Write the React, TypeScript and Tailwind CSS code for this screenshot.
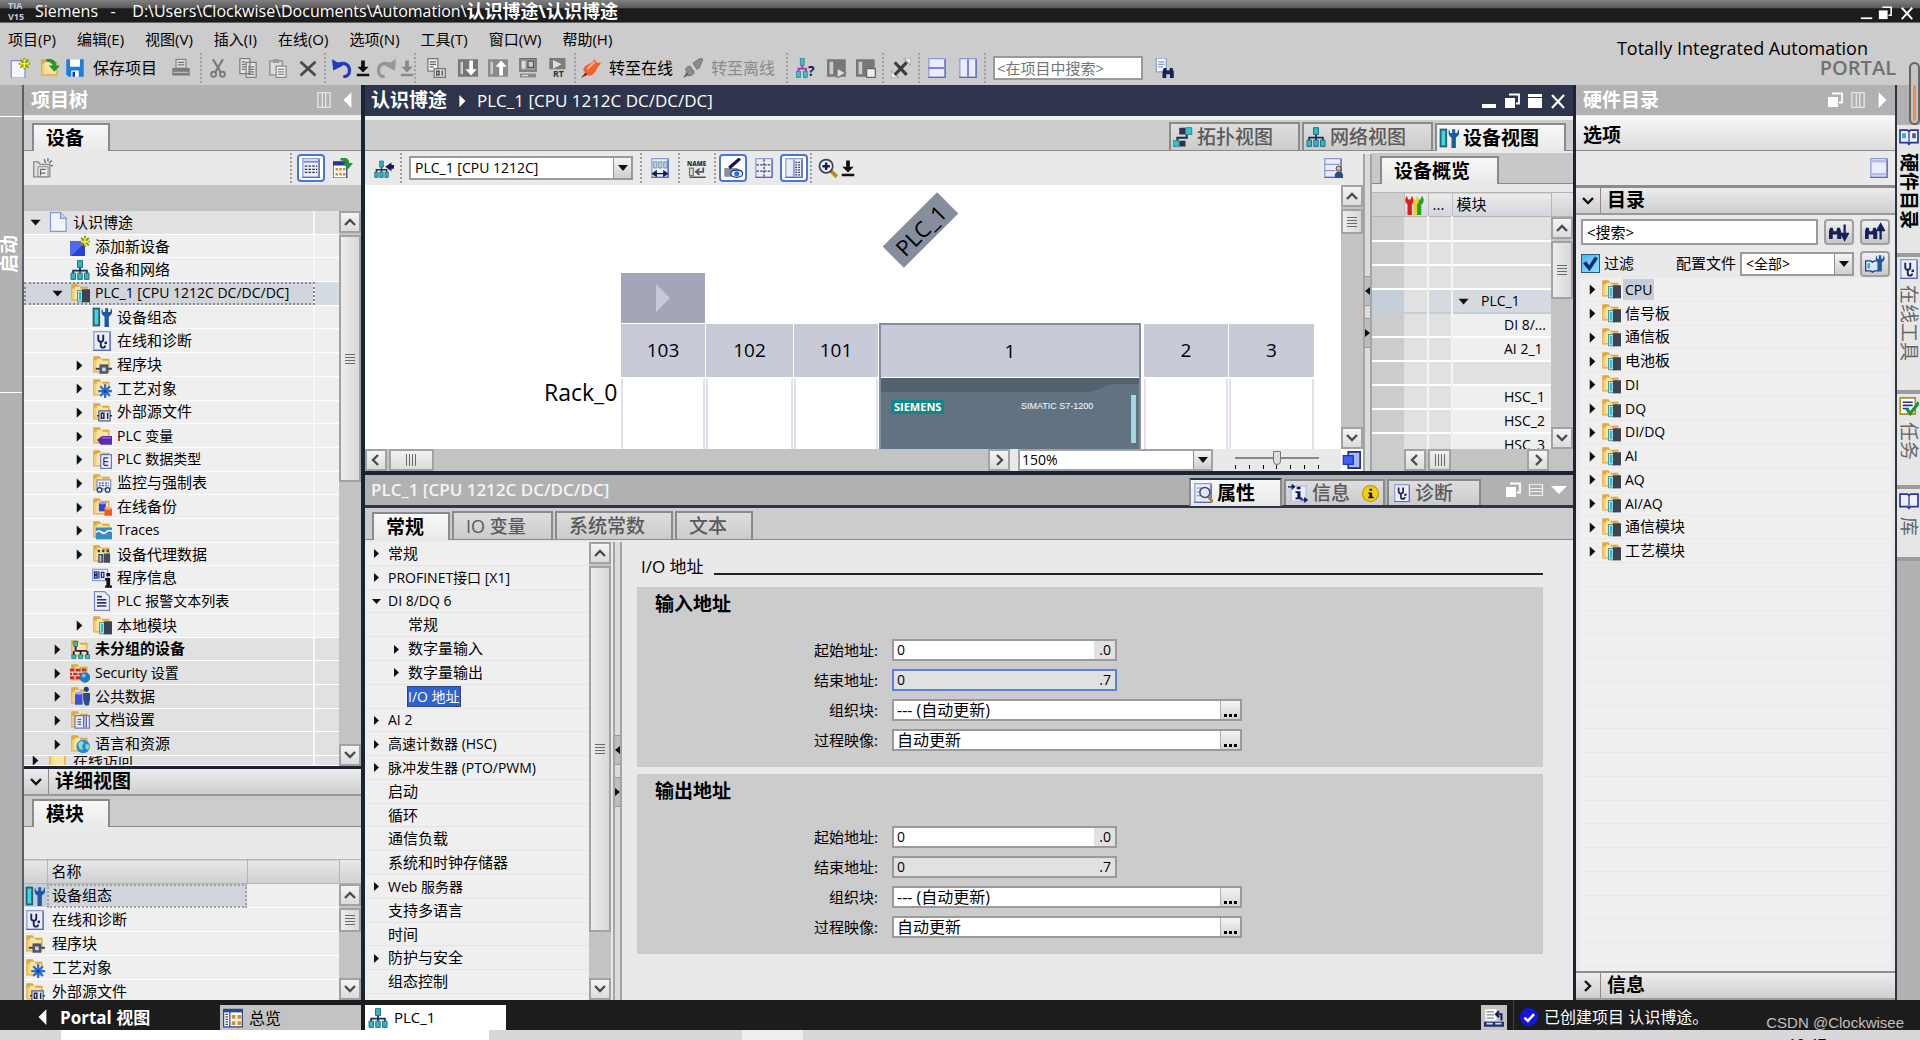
import type { ReactNode } from 'react';
import clsx from 'clsx';

/* ---------- icons, drawn on a 16 x 16 grid ---------- */

const folder = (
  <>
    <path d="M1 1h5l1.5 2H14v11H1z" fill="#e0a83c" />
    <path d="M2 4.5h2V3h3.5l1 1.5H13V13H2z" fill="#fbe3a0" />
    <path d="M2 13V5l1.5-1.5V13z" fill="#f6cd72" />
  </>
);

const page = (
  <>
    <path d="M1.5.5h13v15h-13z" fill="#e9edff" stroke="#8f9bd0" />
    <path d="M1 15.5h14M14.5 1v14" stroke="#5a68b8" />
  </>
);

const network = (
  <>
    <path d="M8 5v4M2.5 11V8.5h11V11M8 9v2" stroke="#1c2a5c" strokeWidth="1.4" fill="none" />
    <path d="M6 .5h4V6H6zM.8 10.5h3.6v5H.8zM6.2 10.5h3.6v5H6.2zM11.6 10.5h3.6v5h-3.6z" fill="#2fb8c4" stroke="#2a6f86" strokeWidth=".8" />
  </>
);

const stethoscope = (
  <path d="M5 3v3.5a2 2 0 0 0 4 0V3M7 9v2.5a1.6 1.6 0 0 0 3.5 0" stroke="#1c2350" strokeWidth="1.5" fill="none" />
);

const book = (
  <>
    <path d="M.8 2.5h6L8 3.5l1.2-1h6v10h-6L8 13.8l-1.2-1.3h-6z" fill="#eef1ff" stroke="#2733a0" strokeWidth="1.3" />
    <path d="M8 3.5v10" stroke="#2733a0" />
  </>
);

const binoculars = (
  <path d="M1 14V8l1.5-4h3L6.5 7h3l1-3h3L15 8v6h-4.5v-4h-5v4z" fill="#18205c" />
);

const ICONS: Record<string, ReactNode> = {
  newProject: (
    <>
      <path d="M1 2h8l3 4v10H1z" fill="#f3f5ff" stroke="#7f8fe0" />
      <path d="M11.5 0v9M7 4.5h9M8.3 1.3l6.4 6.4M14.7 1.3L8.3 7.7" stroke="#8c9a00" strokeWidth="1.6" />
      <path d="M11.5 1v7M8 4.5h7" stroke="#f4f04a" strokeWidth="1.2" />
    </>
  ),
  open: (
    <>
      {folder}
      <path d="M5 1c5-1 8 1 8 5h3l-4.500 5L7 6h3c0-2-2-3-5-3z" fill="#1f9636" />
    </>
  ),
  save: (
    <>
      <path d="M1 1h14v14H3l-2-2z" fill="#1c7fe0" />
      <path d="M4 1h8v6H4zM5 10h6v5H5z" fill="#fff" />
      <path d="M6 11h2v4H6z" fill="#0b3f94" />
    </>
  ),
  print: (
    <>
      <path d="M4 1h8v7H4z" fill="#ddd" stroke="#888" />
      <path d="M5.500 3.500h5M5.500 5.500h5" stroke="#777" />
      <path d="M1 8h14v6H1z" fill="#7c7c7c" />
      <path d="M2 11h12v1H2z" fill="#bbb" />
    </>
  ),
  cut: (
    <>
      <path d="M4 1l6 10M12 1L6 11" stroke="#7a7a7a" strokeWidth="1.800" />
      <circle cx="4.500" cy="13" r="2" fill="none" stroke="#7a7a7a" strokeWidth="1.500" />
      <circle cx="11.500" cy="13" r="2" fill="none" stroke="#7a7a7a" strokeWidth="1.500" />
    </>
  ),
  copy: (
    <>
      <path d="M1.500.5h8v12h-8zM6.500 3.500h8v12h-8z" fill="#e4e4e4" stroke="#808080" />
      <path d="M3 3h3M3 5h3M3 7h3M3 9h3M8 7h5M8 9h5M8 11h5M8 13h5" stroke="#777" />
    </>
  ),
  paste: (
    <>
      <path d="M1.500 2.500h10v11h-10z" fill="#ddd" stroke="#8a8a8a" />
      <path d="M4 1h5v3H4z" fill="#999" />
      <path d="M6.500 6.500h8v9h-8z" fill="#eee" stroke="#8a8a8a" />
      <path d="M8 9h5M8 11h5M8 13h5" stroke="#888" />
    </>
  ),
  delete: <path d="M2 3l12 11M14 3L2 14" stroke="#484848" strokeWidth="2.200" />,
  undo: (
    <>
      <path d="M5 5c6-2 9 1 9 5 0 3-2 5-5 5" fill="none" stroke="#2438c0" strokeWidth="2.600" />
      <path d="M0 1l1 9 8-4z" fill="#2438c0" />
    </>
  ),
  redo: (
    <>
      <path d="M11 5C5 3 2 6 2 10c0 3 2 5 5 5" fill="none" stroke="#969696" strokeWidth="2.600" />
      <path d="M16 1l-1 9-8-4z" fill="#969696" />
    </>
  ),
  drop: (
    <path d="M6.500 2h3v5h3L8 11.500 3.500 7h3zM3 12.500h10v2H3z" fill="#111" />
  ),
  dropOff: (
    <path d="M6.500 2h3v5h3L8 11.500 3.500 7h3zM3 12.500h10v2H3z" fill="#888" />
  ),
  compile: (
    <>
      <path d="M1.500.5h8v10h-8z" fill="#eee" stroke="#777" />
      <path d="M3 3h5M3 5h5M3 7h3" stroke="#666" />
      <path d="M6.500 8.500h9v7h-9z" fill="#ddd" stroke="#777" />
      <path d="M8.500 10.500h2v3h-2zM13 10v4" stroke="#444" fill="none" />
    </>
  ),
  download: (
    <>
      <path d="M0 1h16v14H0z" fill="#777" />
      <path d="M2 3h2v10H2z" fill="#ccc" />
      <path d="M9 2h3v7h3l-4.500 5L6 9h3z" fill="#fff" />
    </>
  ),
  upload: (
    <>
      <path d="M0 1h16v14H0z" fill="#8a8a8a" />
      <path d="M2 3h2v10H2z" fill="#ccc" />
      <path d="M9 14h3V7h3l-4.500-5L6 7h3z" fill="#fff" />
    </>
  ),
  simulate: (
    <>
      <path d="M1.500.5h13v10h-13z" fill="#999" stroke="#6c6c6c" />
      <path d="M3 2.500h3v6H3z" fill="#ddd" />
      <path d="M8 2.500h4.500v5H8z" fill="#ccc" stroke="#555" />
      <path d="M1.500 12.500h13v3h-13z" fill="#888" />
      <path d="M3 14h5" stroke="#ddd" />
    </>
  ),
  runtime: (
    <>
      <path d="M1 0h13v9H1z" fill="#7c7c7c" />
      <path d="M4 1.500l7 3.500-7 3.500z" fill="#ddd" />
      <text x="4" y="15" fontSize="7" fontWeight="700" fill="#333">RT</text>
    </>
  ),
  goOnline: (
    <>
      <path d="M0 16l4-5 2 2z" fill="#7a2a10" />
      <path d="M2 10c-1-3 4-5 6-6l3-3 1.500 2.500L16 4l-3 4c-1 3-4 7-7 6z" fill="#f2622c" />
      <path d="M5 9l6-6" stroke="#ffb08c" strokeWidth="1.500" />
    </>
  ),
  goOffline: (
    <>
      <path d="M0 16l3-5 3 2z" fill="#666" />
      <path d="M2 9c1-2 3-3 4-2l3 4c0 2-3 4-5 3zM8 4l6-4 2 1-3 7-2 1z" fill="#8c8c8c" stroke="#666" strokeWidth=".6" />
    </>
  ),
  accessible: (
    <>
      <path d="M5 5v4M2 11V8.500h6V11" stroke="#b030b0" strokeWidth="1.500" fill="none" />
      <path d="M3.500 0h3v6h-3zM.5 10.500h3v5h-3zM6 10.500h3v5H6z" fill="#35c8d0" stroke="#2a6f86" strokeWidth=".6" />
      <text x="9.500" y="14.500" fontSize="11" fontWeight="700" fill="#141a50">?</text>
    </>
  ),
  startCpu: (
    <>
      <path d="M0 1h15v14H0z" fill="#777" />
      <path d="M2 3h3v10H2z" fill="#ccc" />
      <path d="M8 8l7 4-7 4z" fill="#ddd" stroke="#777" />
    </>
  ),
  stopCpu: (
    <>
      <path d="M0 1h15v14H0z" fill="#777" />
      <path d="M2 3h3v10H2z" fill="#ccc" />
      <path d="M8.500 8.500h7v7h-7z" fill="#eee" stroke="#666" />
    </>
  ),
  crossRef: (
    <>
      <path d="M10 0h6v6zM0 10l6 6H0z" fill="#f0f0f0" stroke="#8a8a8a" strokeWidth=".8" />
      <path d="M3 3.500l9.500 10M12.500 3.500L3 13.500" stroke="#3c3c3c" strokeWidth="2.400" />
    </>
  ),
  splitH: (
    <>
      {page}
      <path d="M1 8h14" stroke="#6f7ee0" strokeWidth="1.500" />
    </>
  ),
  splitV: (
    <>
      {page}
      <path d="M8 1v14" stroke="#6f7ee0" strokeWidth="1.500" />
    </>
  ),
  findProject: (
    <>
      <path d="M1 0h8v11H1z" fill="#f3f5ff" stroke="#8f9bd0" />
      <path d="M2.500 3h5M2.500 5h5M2.500 7h4" stroke="#8f9bd0" />
      <path d="M6 16v-5l1-3h2l.5 2h2l.5-2h2l1 3v5h-3v-3H9v3z" fill="#18205c" />
    </>
  ),
  newGroup: (
    <>
      <path d="M.5 3h4l1 2h8v10H.5z" fill="#ddd" stroke="#888" />
      <path d="M4 7h8v8H4z" fill="#eee" stroke="#888" strokeWidth=".8" />
      <path d="M6 9v5M6 9h4M6 12h4M9 1l1 3M12 0v3M15 2l-2 2M16 6h-2" stroke="#666" fill="none" />
    </>
  ),
  listView: (
    <>
      {page}
      <path d="M2 3h12" stroke="#7c8cdc" strokeWidth="1.500" />
      <path d="M3 6.500h10M3 9h10M3 11.500h10" stroke="#333" strokeDasharray="2 1" />
    </>
  ),
  portalOpen: (
    <>
      <path d="M0 3h11v13H0z" fill="#fff" stroke="#2a3a8a" />
      <path d="M0 3h11v3H0z" fill="#2a3a8a" />
      <path d="M2 8h2v2H2zM5 8h2v2H5zM8 8h2v2H8zM2 12h2v2H2zM5 12h2v2H5zM8 12h2v2H8z" fill="#e08a1c" />
      <path d="M6 0c5-1 7 1 7 4h3l-4 5-4-5h2c0-1-1-2-4-2z" fill="#1f9636" />
    </>
  ),
  project: (
    <>
      <path d="M2 .5h8L14.500 5v10.500H2z" fill="#f1f4ff" stroke="#8495d8" />
      <path d="M10 .5V5h4.500" fill="#c9d3fa" stroke="#8495d8" />
    </>
  ),
  addDevice: (
    <>
      <path d="M0 4h12v12H0z" fill="#2b3fd6" />
      <path d="M0 4h12v1L1 16H0z" fill="#4f6af0" />
      <path d="M12 0v9M7.500 4.500h8.500M9 1.500l6 6M15 1.500l-6 6" stroke="#8a9400" strokeWidth="1.500" />
      <path d="M12 1.500v6M9 4.500h6" stroke="#f7f35a" strokeWidth="1.200" />
    </>
  ),
  network,
  networkGo: (
    <>
      <g transform="translate(0 2) scale(.75 .875)">{network}</g>
      <path d="M16 5.500h-2v-2L9 7l5 3.500v-2h2z" fill="#121a60" />
    </>
  ),
  topology: (
    <>
      <path d="M11 6v2.500H3.500V11" fill="none" stroke="#1c2a5c" strokeWidth="1.600" />
      <path d="M5 .5h5V6H5zM5 11h5v4.500H5z" fill="#2c3448" />
      <path d="M10 .5h5V6h-5zM0 11h5v4.500H0z" fill="#35c0cc" stroke="#2a6f86" strokeWidth=".6" />
    </>
  ),
  config: (
    <>
      <path d="M.5.5h6v15h-6z" fill="#2b5f74" />
      <path d="M2 2h3v12H2z" fill="#35dbe0" />
      <path d="M8 1l1 3h1.500V1h2.500v3h1.500l1-3c2 4-1 6-2 6.500V16h-3.500V7.500C8 7 7 4 8 1z" fill="#1d5a9e" />
    </>
  ),
  diagnose: (
    <>
      {page}
      {stethoscope}
      <path d="M10 8.500h2v2h-2z" fill="#1c2350" />
    </>
  ),
  folder,
  folderPlc: (
    <>
      {folder}
      <path d="M6 6h5v9H6z" fill="#d8f6f8" stroke="#2a6f86" strokeWidth=".6" />
      <path d="M7 7h2v7H7z" fill="#22c4cc" />
      <path d="M9.500 5H16v10.500H9.500z" fill="#3c4454" />
    </>
  ),
  blocks: (
    <>
      {folder}
      <path d="M3 11h13" stroke="#3a4050" strokeWidth="1.500" />
      <path d="M6 7.500h7V15H6z" fill="#4d5568" />
      <path d="M8 10h3v3H8z" fill="#c8cede" />
    </>
  ),
  tech: (
    <>
      {folder}
      <path d="M10.500 5v11M5 10.500h11M6.600 6.600l7.800 7.800M14.400 6.600l-7.800 7.800" stroke="#2a6fd8" strokeWidth="1.800" />
      <circle cx="10.500" cy="10.500" r="2.800" fill="#2a6fd8" />
      <circle cx="10.500" cy="10.500" r="1.200" fill="#123a90" />
    </>
  ),
  source: (
    <>
      {folder}
      <path d="M5.500 7h9v8h-9z" fill="#e6e8f4" stroke="#555e7c" />
      <path d="M7.500 9h2v4h-2zM12.500 8.500v5M4 11h1.500M14.500 11H16" stroke="#222a50" strokeWidth="1.200" fill="none" />
    </>
  ),
  tags: (
    <>
      {folder}
      <path d="M4 11l4-3h8v7H7z" fill="#5c2cb0" />
      <path d="M8 9h7v1H8z" fill="#9a74dc" />
    </>
  ),
  types: (
    <>
      {folder}
      <path d="M7 4.500h8.500v11H7z" fill="#eceefc" stroke="#6c78c0" />
      <path d="M9.500 7v6M9.500 7H13M9.500 10H13M9.500 13H13" stroke="#2a3470" fill="none" />
    </>
  ),
  watch: (
    <>
      {folder}
      <path d="M4 5.500h11v7H4z" fill="#eceefc" stroke="#8a94cc" />
      <path d="M5.500 8h8M5.500 10h8" stroke="#555" strokeDasharray="1.500 1" />
      <circle cx="6" cy="13.500" r="1.800" fill="#cfe" stroke="#23307c" />
      <circle cx="12.500" cy="13.500" r="1.800" fill="#cfe" stroke="#23307c" />
    </>
  ),
  backup: (
    <>
      {folder}
      <path d="M5.500 4.500h5.500v7H5.500z" fill="#2b49d8" />
      <ellipse cx="8.200" cy="4.500" rx="2.800" ry="1.200" fill="#8aa0f4" />
      <path d="M10 9h6v6h-6z" fill="#ee5a22" />
      <ellipse cx="13" cy="9" rx="3" ry="1.200" fill="#ffa27a" />
    </>
  ),
  traces: (
    <>
      {folder}
      <path d="M3 6h13v9.500H3z" fill="#3a8cc4" />
      <path d="M3 10c4-4 5 3 8 0 2-2 3-2 5-1" stroke="#fff" strokeWidth="1.400" fill="none" />
    </>
  ),
  proxy: (
    <>
      {folder}
      <path d="M4.500 4.500h2v2h-2zM8 4.500h2v2H8zM11.500 4.500h2v2h-2z" fill="#333b50" />
      <path d="M5 8h4v7H5zM9.500 7.500h5V15h-5z" fill="#444d60" />
      <path d="M6 9h1.500v5H6z" fill="#b8c0d0" />
    </>
  ),
  programInfo: (
    <>
      <path d="M.5 1h12v9H.5z" fill="#e9edff" stroke="#8ea0dc" />
      <path d="M2 3h2v2H2zM2 6h2v2H2zM5.500 2.500v6M7.500 3.500h2v4h-2z" fill="none" stroke="#1c2870" />
      <path d="M11.500 4h3v2.500h-3zM10.500 8h4v6H16v1.800h-5.500V14h1v-4h-1z" fill="#111" />
    </>
  ),
  textList: (
    <>
      <path d="M2 .5h8L14 4.500v11H2z" fill="#eef0ff" stroke="#7c88cc" />
      <path d="M4 4.500h4M4 7h7.500M4 9.500h7.500M4 12h7.500" stroke="#2a3478" strokeWidth="1.300" />
    </>
  ),
  ungrouped: (
    <>
      {folder}
      <path d="M4.500 3v6.500M4.500 9.500h9M3 13V9.500M8.500 13V9.500M14 13V9.500" stroke="#1c2450" strokeWidth="1.500" fill="none" />
      <path d="M3 2h3v4H3zM1.500 12.500h3V16h-3zM7 12.500h3V16H7zM12.500 12.500h3V16h-3z" fill="#35c0cc" stroke="#2a5f76" strokeWidth=".6" />
    </>
  ),
  security: (
    <>
      {folder}
      <path d="M0 4.500h13V13H0z" fill="#c43020" />
      <path d="M0 7.300h13M0 10.200h13M4 4.500v3M9 4.500v3M2 7.300v3M6.500 7.300v3M4 10.200V13" stroke="#f6d8d0" strokeWidth=".9" />
      <circle cx="12" cy="11.500" r="4.200" fill="#1c7cc4" />
      <circle cx="11" cy="10" r="1.500" fill="#7cc4f0" />
    </>
  ),
  common: (
    <>
      {folder}
      <path d="M4 5.500h6V15H4z" fill="#3a52e0" />
      <ellipse cx="7" cy="5.500" rx="3" ry="1.300" fill="#a0b0fa" />
      <circle cx="13" cy="2.500" r="2" fill="#233c74" />
      <path d="M10.500 5.500H16V11l-1 4.500h-3L10.500 11z" fill="#23508c" />
    </>
  ),
  docs: (
    <>
      {folder}
      <path d="M4 4.500h11.500v10H4z" fill="#eceefc" stroke="#6c78c0" />
      <path d="M6 7.500h3M6 9.500h3M6 11.500h3M11 5v9M13 5v9" stroke="#4c58a8" />
    </>
  ),
  languages: (
    <>
      {folder}
      <circle cx="10.500" cy="10" r="5.400" fill="#2a86e0" />
      <path d="M7 7c2-2 4-1 4 0s-2 2-1 4-1 2-2 1-2-3-1-5zM12.500 8l3 1-1 3.500-2-1z" fill="#8ee0c4" />
    </>
  ),
  fit: (
    <>
      {page}
      <path d="M3 3h2.500v5H3zM7 3h2.500v5H7zM11 3h2.500v5H11z" fill="#b8dce0" stroke="#5a7f94" strokeWidth=".6" />
      <path d="M3 12.500h10M5 10.500l-3 2 3 2zM11 10.500l3 2-3 2z" stroke="#141c58" fill="#141c58" />
    </>
  ),
  showName: (
    <>
      <text x="0" y="6" fontSize="5" fontWeight="800" fill="#333">NAME</text>
      <path d="M2 8h3v6H2z" fill="#ddd" stroke="#777" />
      <path d="M13 7.500V11H8M10 8.500L7 11l3 2.500M2 15.500h13" stroke="#555" strokeWidth="1.400" fill="none" />
    </>
  ),
  showLabel: (
    <>
      <path d="M1 8h10l4 2v5H1z" fill="#8a8f9c" />
      <path d="M13.500.5L5 8" stroke="#121850" strokeWidth="2.600" />
      <ellipse cx="11" cy="12.500" rx="4.800" ry="2.900" fill="#e8f0ff" stroke="#23307c" />
      <circle cx="11" cy="12.500" r="2" fill="#2a6fe0" />
    </>
  ),
  grid: (
    <>
      {page}
      <path d="M2 5.500h12M2 10.500h12" stroke="#445" strokeDasharray="2 1" />
      <path d="M8 1v14" stroke="#445" strokeDasharray="2 1" />
    </>
  ),
  tableSide: (
    <>
      {page}
      <path d="M8 1v14" stroke="#6f7ee0" />
      <path d="M9 3.500h5M9 5.500h5M9 7.500h5M9 9.500h5M9 11.500h5M9 13.500h5" stroke="#444" strokeDasharray="1.500 .8" />
    </>
  ),
  zoomIn: (
    <>
      <path d="M10 10l5 5" stroke="#b98a24" strokeWidth="3" />
      <circle cx="6.500" cy="6.500" r="5.300" fill="#eef4ff" stroke="#3a3f58" strokeWidth="1.400" />
      <path d="M6.500 3.500v6M3.500 6.500h6" stroke="#121a60" strokeWidth="2" />
    </>
  ),
  userView: (
    <>
      {page}
      <path d="M1 5h14M1 10h9" stroke="#8f9bd0" />
      <circle cx="12.500" cy="8.500" r="2" fill="#e2b48c" stroke="#222" strokeWidth=".6" />
      <path d="M9.500 16v-3l1.500-2h3l2 2v3z" fill="#23508c" />
    </>
  ),
  overviewCorner: (
    <>
      <path d="M5 1.500h9.500v13H5z" fill="#a8b8f0" stroke="#1c2a7c" strokeWidth="1.300" />
      <path d="M1 4.500h8v7H1z" fill="#3c62f4" stroke="#1c36c0" />
    </>
  ),
  wrenches: (
    <>
      <path d="M9.500.5l1 3h2l1-3c2.500 3 1.500 6-.5 7V16H9.500V7.500z" fill="#24a02c" />
      <path d="M6 .5l1 3h2l1-3c2 3 1 6-.5 7V16h-3V7.500z" fill="#f2d21c" />
      <path d="M1.500.5l1 3h2l1-3C7.500 3.500 6.500 6.500 5.500 7.500V16H2V7.500C0 6.500-.5 3.500 1.500.5z" fill="#dc2020" />
    </>
  ),
  properties: (
    <>
      {page}
      <path d="M3 4h5M3 7h3M3 10h3" stroke="#8f9bd0" />
      <path d="M12 11l4 4" stroke="#b98a24" strokeWidth="2.400" />
      <circle cx="9.500" cy="7.500" r="4" fill="#dfe8fa" stroke="#444a64" strokeWidth="1.200" />
    </>
  ),
  infoArrows: (
    <>
      <path d="M2.500 2.500h12v12h-12z" fill="#eef0ff" stroke="#b4bce8" />
      <path d="M7 3h3v2H7zM6 6.500h4v5h1.500V13H6v-1.500h1.500V8H6z" fill="#10165c" />
      <path d="M0 2.500h3V.5L6 3 3 5.500v-2H0zM10 13h3v-2l3 2.500-3 2.500v-2h-3z" fill="#10165c" />
    </>
  ),
  infoBadge: (
    <>
      <circle cx="8" cy="8" r="7.500" fill="#f2d010" stroke="#b89400" />
      <path d="M7 3.500h2.500v2H7zM6 7h3.500v4H11v1.500H6V11h1V8.500H6z" fill="#111" />
    </>
  ),
  pane: (
    <>
      {page}
      <path d="M2 2.500h12M2 13h12" stroke="#b4bce8" strokeWidth="2" />
    </>
  ),
  findDown: (
    <>
      <g transform="translate(-1 1) scale(.72 .9)">{binoculars}</g>
      <path d="M12.500 2v8M10 9.500h5L12.500 14z" stroke="#18205c" strokeWidth="1.800" fill="#18205c" />
    </>
  ),
  findUp: (
    <>
      <g transform="translate(-1 1) scale(.72 .9)">{binoculars}</g>
      <path d="M12.500 14V6M10 6.500h5L12.500 2z" stroke="#18205c" strokeWidth="1.800" fill="#18205c" />
    </>
  ),
  profile: (
    <>
      <path d="M.5 5.500h4l1.500 1 1.500-1h3v8h-3L6 14.500l-1.500-1h-4z" fill="#d8e6fa" stroke="#2733a0" />
      <path d="M2 7.500h2v4H2z" fill="#22b4cc" />
      <path d="M9 1l1 3h1V1h2v3h1l1-3c1.500 3 0 5-1.500 5.500V14h-3V6.500C9 6 8 4 9 1z" fill="#1d5a9e" />
    </>
  ),
  catalogBook: (
    <>
      {book}
      <path d="M2.500 5h3v4h-3z" fill="#22b4cc" />
      <path d="M10.500 5h3v4h-3z" fill="#5a6478" />
    </>
  ),
  book,
  tasks: (
    <>
      <path d="M1 1.500h12v13H1z" fill="#fff" stroke="#b08a28" strokeWidth="1.300" />
      <path d="M3 5h8M3 7.500h8M3 10h5" stroke="#23307c" strokeWidth="1.300" />
      <path d="M6 10l3 4 7-9" stroke="#1f9636" strokeWidth="2.600" fill="none" />
    </>
  ),
  overviewTab: (
    <>
      <path d="M.5 1h15v14H.5z" fill="#fff" stroke="#2a4a8a" />
      <path d="M.5 1h15v2.500H.5z" fill="#2a4a8a" />
      <path d="M2 5h2M2 7h2M2 9h2M2 11h2M2 13h2M5.500 3v12" stroke="#2a4a8a" />
      <path d="M7 5.500h3v3H7zM11.500 5.500h3v3h-3zM7 10.500h3v3H7zM11.500 10.500h3v3h-3z" fill="#e08a1c" />
    </>
  ),
  statusToggle: (
    <>
      <path d="M1 1h9v9H1z" fill="#fff" />
      <path d="M2 3h6M2 5.500h6M2 8h6" stroke="#888" />
      <path d="M0 11h16v4H0z" fill="#23306c" />
      <path d="M2 12.500h5M9 12.500h5" stroke="#cfd6f4" strokeWidth="1.500" />
      <path d="M10 5h4v5M12 2.500L9.500 5 12 7.500" stroke="#141c58" strokeWidth="1.600" fill="none" />
    </>
  ),
  check: (
    <>
      <circle cx="8" cy="8" r="8" fill="#1414e8" />
      <path d="M4 8.500l3 3 5.500-6" stroke="#fff" strokeWidth="2.200" fill="none" />
    </>
  ),
  winMin: <path d="M1 11h14v4H1z" fill="#fff" />,
  winMinThin: <path d="M1 13h13v2H1z" fill="#fff" />,
  winRestore: (
    <>
      <path d="M5 1.500h10v9h-3" stroke="#fff" strokeWidth="1.800" fill="none" />
      <path d="M1 5h10v10H1z" fill="#fff" />
    </>
  ),
  winMax: <path d="M1 1h14v3H1zM1 5h14v10H1z" fill="#fff" />,
  winClose: <path d="M2 2l12 13M14 2L2 15" stroke="#fff" strokeWidth="2.200" />,
  columns: <path d="M2.500 1.500h11v13h-11zM6.500 2v12M9.500 2v12" stroke="#e4e4e4" strokeWidth="1.200" fill="none" />,
  rows: <path d="M1.500 2.500h13v11h-13zM2 6.500h12M2 9.500h12" stroke="#f0f0f0" strokeWidth="1.200" fill="none" />,
  triLeft: <path d="M11 1v14L4 8z" fill="#fff" />,
  triRight: <path d="M5 1v14l7-7z" fill="#fff" />,
  triDown: <path d="M0 4h16l-8 8z" fill="#fff" />,
  chevUp: <path d="M3 11l5-5 5 5" stroke="#4c4c4c" strokeWidth="2.400" fill="none" />,
  chevDown: <path d="M3 5l5 5 5-5" stroke="#4c4c4c" strokeWidth="2.400" fill="none" />,
  chevLeft: <path d="M10 3L5 8l5 5" stroke="#4c4c4c" strokeWidth="2.400" fill="none" />,
  chevRight: <path d="M6 3l5 5-5 5" stroke="#4c4c4c" strokeWidth="2.400" fill="none" />,
  barDown: <path d="M3 5l5 5 5-5" stroke="#111" strokeWidth="2.400" fill="none" />,
  barRight: <path d="M5 3l5 5-5 5" stroke="#111" strokeWidth="2.400" fill="none" />,
  nodeOpen: <path d="M4 6h9l-4.500 5z" fill="#111" />,
  nodeClosed: <path d="M6 4v9l5-4.500z" fill="#111" />,
};

function Icon({ name, className = 'size-5' }: { name: string; className?: string }) {
  return (
    <svg viewBox="0 0 16 16" className={clsx('shrink-0', className)} aria-hidden="true">
      {ICONS[name]}
    </svg>
  );
}

/* ---------- shared controls ---------- */

function ToolButton({ icon, label, className, active }: { icon: string; label: string; className?: string; active?: boolean }) {
  return (
    <button
      type="button"
      aria-label={label}
      className={clsx(
        'flex shrink-0 items-center justify-center',
        className ?? 'h-7 w-[30px]',
        active && 'rounded-sm border-2 border-[#4a76d4] bg-white',
      )}
    >
      <Icon name={icon} />
    </button>
  );
}

function Separator() {
  return <span className="mx-px h-[30px] shrink-0 border-l-2 border-dotted border-[#a0a0a0]" />;
}

const scrollButton =
  'flex size-[22px] shrink-0 items-center justify-center border-2 border-[#a2a2a2] bg-linear-to-b from-[#f4f4f4] to-[#dcdcdc]';

function VScroll({ thumb, rest }: { thumb: number; rest: number }) {
  return (
    <div className="flex w-[22px] shrink-0 flex-col gap-0.5 bg-[#c3c3c3]">
      <button type="button" aria-label="向上滚动" className={scrollButton}>
        <Icon name="chevUp" className="size-4" />
      </button>
      <div
        className="flex basis-0 flex-col items-center justify-center gap-0.5 border-2 border-[#a2a2a2] bg-linear-to-r from-[#ececec] to-[#d8d8d8]"
        style={{ flexGrow: thumb }}
      >
        {[0, 1, 2, 3].map((i) => (
          <span key={i} className="h-px w-2.5 bg-[#6a6a6a]" />
        ))}
      </div>
      <div className="basis-0" style={{ flexGrow: rest }} />
      <button type="button" aria-label="向下滚动" className={scrollButton}>
        <Icon name="chevDown" className="size-4" />
      </button>
    </div>
  );
}

function HScroll({ thumb, rest }: { thumb: number; rest: number }) {
  return (
    <div className="flex h-[22px] flex-1 gap-0.5 bg-[#c3c3c3]">
      <button type="button" aria-label="向左滚动" className={scrollButton}>
        <Icon name="chevLeft" className="size-4" />
      </button>
      <div
        className="flex basis-0 items-center justify-center gap-0.5 border-2 border-[#a2a2a2] bg-linear-to-b from-[#f0f0f0] to-[#dcdcdc]"
        style={{ flexGrow: thumb }}
      >
        {[0, 1, 2, 3].map((i) => (
          <span key={i} className="h-3 w-px bg-[#6a6a6a]" />
        ))}
      </div>
      <div className="basis-0" style={{ flexGrow: rest }} />
      <button type="button" aria-label="向右滚动" className={scrollButton}>
        <Icon name="chevRight" className="size-4" />
      </button>
    </div>
  );
}

function Splitter({ className }: { className: string }) {
  return (
    <div className={clsx('flex w-[9px] shrink-0 flex-col gap-3 border-x-2 border-[#a4a4a4] bg-[#dcdcdc]', className)}>
      {['M5 0v8L0 4z', 'M0 0v8l5-4z'].map((d) => (
        <span key={d} className="flex h-[30px] items-center justify-center border-y border-[#999] bg-[#bdbdbd]">
          <svg viewBox="0 0 5 8" className="h-2 w-[5px] shrink-0">
            <path d={d} fill="#111" />
          </svg>
        </span>
      ))}
    </div>
  );
}

function Tab({ children, active, className }: { children: ReactNode; active?: boolean; className?: string }) {
  return (
    <button
      type="button"
      role="tab"
      aria-selected={!!active}
      className={clsx(
        'flex h-7 shrink-0 items-center border-2 border-b-0 border-[#8a8a8a] text-[19px] leading-none whitespace-nowrap',
        active
          ? '-mb-px bg-linear-to-b from-[#f8f8f8] to-[#e9e9e9] font-bold text-black'
          : 'bg-linear-to-b from-[#dedede] to-[#cbcbcb] font-medium text-[#5a5a5a]',
        className,
      )}
    >
      {children}
    </button>
  );
}

function DropArrow() {
  return (
    <span className="pointer-events-none absolute inset-y-0.5 right-0.5 flex w-[18px] items-center justify-center border-l border-[#909090] bg-linear-to-b from-[#f4f4f4] to-[#cfcfcf]">
      <svg viewBox="0 0 10 6" className="h-1.5 w-2.5">
        <path d="M0 0h10L5 6z" fill="#111" />
      </svg>
    </span>
  );
}

function PickList({ value, label, className }: { value: string; label: string; className: string }) {
  return (
    <span className={clsx('relative flex h-6', className)}>
      <select aria-label={label} className="w-full appearance-none border-2 border-[#9a9a9a] bg-white pl-1 text-sm leading-5">
        <option>{value}</option>
      </select>
      <DropArrow />
    </span>
  );
}

/* ---------- data ---------- */

type Node = {
  text: string;
  icon: string;
  level: number;
  state?: 'open' | 'closed';
  shade?: boolean;
  bold?: boolean;
  selected?: boolean;
};

const projectTree: Node[] = [
  { text: '认识博途', icon: 'project', level: 0, state: 'open', shade: true },
  { text: '添加新设备', icon: 'addDevice', level: 1 },
  { text: '设备和网络', icon: 'network', level: 1 },
  { text: 'PLC_1 [CPU 1212C DC/DC/DC]', icon: 'folderPlc', level: 1, state: 'open', selected: true },
  { text: '设备组态', icon: 'config', level: 2 },
  { text: '在线和诊断', icon: 'diagnose', level: 2 },
  { text: '程序块', icon: 'blocks', level: 2, state: 'closed' },
  { text: '工艺对象', icon: 'tech', level: 2, state: 'closed' },
  { text: '外部源文件', icon: 'source', level: 2, state: 'closed' },
  { text: 'PLC 变量', icon: 'tags', level: 2, state: 'closed' },
  { text: 'PLC 数据类型', icon: 'types', level: 2, state: 'closed' },
  { text: '监控与强制表', icon: 'watch', level: 2, state: 'closed' },
  { text: '在线备份', icon: 'backup', level: 2, state: 'closed' },
  { text: 'Traces', icon: 'traces', level: 2, state: 'closed' },
  { text: '设备代理数据', icon: 'proxy', level: 2, state: 'closed' },
  { text: '程序信息', icon: 'programInfo', level: 2 },
  { text: 'PLC 报警文本列表', icon: 'textList', level: 2 },
  { text: '本地模块', icon: 'folderPlc', level: 2, state: 'closed' },
  { text: '未分组的设备', icon: 'ungrouped', level: 1, state: 'closed', shade: true, bold: true },
  { text: 'Security 设置', icon: 'security', level: 1, state: 'closed', shade: true },
  { text: '公共数据', icon: 'common', level: 1, state: 'closed', shade: true },
  { text: '文档设置', icon: 'docs', level: 1, state: 'closed', shade: true },
  { text: '语言和资源', icon: 'languages', level: 1, state: 'closed', shade: true },
  { text: '在线访问', icon: 'folder', level: 0, state: 'closed', shade: true },
];

const treeIndent = ['pl-0', 'pl-[22px]', 'pl-[44px]'];

type NavItem = { text: string; level?: number; state?: 'open' | 'closed'; selected?: boolean };

const navItems: NavItem[] = [
  { text: '常规', state: 'closed' },
  { text: 'PROFINET接口 [X1]', state: 'closed' },
  { text: 'DI 8/DQ 6', state: 'open' },
  { text: '常规', level: 1 },
  { text: '数字量输入', level: 1, state: 'closed' },
  { text: '数字量输出', level: 1, state: 'closed' },
  { text: 'I/O 地址', level: 1, selected: true },
  { text: 'AI 2', state: 'closed' },
  { text: '高速计数器 (HSC)', state: 'closed' },
  { text: '脉冲发生器 (PTO/PWM)', state: 'closed' },
  { text: '启动' },
  { text: '循环' },
  { text: '通信负载' },
  { text: '系统和时钟存储器' },
  { text: 'Web 服务器', state: 'closed' },
  { text: '支持多语言' },
  { text: '时间' },
  { text: '防护与安全', state: 'closed' },
  { text: '组态控制' },
];

const catalog = ['CPU', '信号板', '通信板', '电池板', 'DI', 'DQ', 'DI/DQ', 'AI', 'AQ', 'AI/AQ', '通信模块', '工艺模块'];

const menus = ['项目(P)', '编辑(E)', '视图(V)', '插入(I)', '在线(O)', '选项(N)', '工具(T)', '窗口(W)', '帮助(H)'];

const details = [
  { text: '设备组态', icon: 'config' },
  { text: '在线和诊断', icon: 'diagnose' },
  { text: '程序块', icon: 'blocks' },
  { text: '工艺对象', icon: 'tech' },
  { text: '外部源文件', icon: 'source' },
];

const overview = ['', '', '', 'PLC_1', 'DI 8/...', 'AI 2_1', '', 'HSC_1', 'HSC_2', 'HSC_3'];

// latin glyphs run wide next to the CJK face, so those labels go one step down
const labelSize = (text: string) => (/[A-Za-z]/.test(text) ? 'text-sm' : 'text-[15px]');

/* ---------- frame ---------- */

function TitleBar() {
  return (
    <header className="flex h-[23px] shrink-0 items-end justify-between overflow-hidden border-b border-[#666] bg-linear-to-b from-[#808080] from-0% via-[#5c5c5c] via-35% to-[#1c1c1c] to-40% pl-2 text-white">
      <div className="flex items-center">
        <span className="flex w-[27px] flex-col text-[9px] leading-[11px] font-bold text-[#c4c8d8]">
          <span>TIA</span>
          <span>V15</span>
        </span>
        <h1 className="flex items-center font-medium whitespace-pre">
          <span className="text-base leading-5">Siemens   -    D:\Users\Clockwise\Documents\Automation\</span>
          <span className="text-lg leading-[22px] font-bold">认识博途\认识博途</span>
        </h1>
      </div>
      <div className="flex items-center gap-1 pb-0.5">
        <button type="button" aria-label="最小化"><Icon name="winMinThin" className="size-3.5" /></button>
        <button type="button" aria-label="还原"><Icon name="winRestore" className="size-3.5" /></button>
        <button type="button" aria-label="关闭" className="pr-1.5 pl-1"><Icon name="winClose" className="size-3.5" /></button>
      </div>
    </header>
  );
}

function Toolbar() {
  return (
    <div className="flex h-[35px] items-center pl-[5px]">
      <ToolButton icon="newProject" label="新建项目" />
      <ToolButton icon="open" label="打开项目" />
      <button type="button" className="flex items-center gap-2 pr-1.5 text-base leading-none">
        <Icon name="save" />
        保存项目
      </button>
      <ToolButton icon="print" label="打印" className="h-7 w-9" />
      <Separator />
      <ToolButton icon="cut" label="剪切" />
      <ToolButton icon="copy" label="复制" />
      <ToolButton icon="paste" label="粘贴" />
      <ToolButton icon="delete" label="删除" />
      <Separator />
      <ToolButton icon="undo" label="撤销" />
      <ToolButton icon="drop" label="撤销列表" className="w-3" />
      <ToolButton icon="redo" label="重做" className="ml-0.5 h-7 w-[30px]" />
      <ToolButton icon="dropOff" label="重做列表" className="w-3" />
      <Separator />
      <ToolButton icon="compile" label="编译" className="ml-0.5 h-7 w-[34px]" />
      <ToolButton icon="download" label="下载" />
      <ToolButton icon="upload" label="上传" />
      <ToolButton icon="simulate" label="仿真" />
      <ToolButton icon="runtime" label="运行系统" />
      <Separator />
      <button type="button" className="flex items-center gap-2 pl-1 text-base leading-none">
        <Icon name="goOnline" />
        转至在线
      </button>
      <button type="button" className="flex items-center gap-2 px-2.5 text-base leading-none text-[#8a8a8a]">
        <Icon name="goOffline" />
        转至离线
      </button>
      <Separator />
      <ToolButton icon="accessible" label="可访问的设备" className="h-7 w-[34px]" />
      <ToolButton icon="startCpu" label="启动 CPU" className="h-7 w-7" />
      <ToolButton icon="stopCpu" label="停止 CPU" />
      <Separator />
      <ToolButton icon="crossRef" label="交叉引用" className="h-7 w-8" />
      <Separator />
      <ToolButton icon="splitH" label="水平拆分" className="h-7 w-8" />
      <ToolButton icon="splitV" label="垂直拆分" />
      <Separator />
      <input
        type="text"
        aria-label="在项目中搜索"
        placeholder="<在项目中搜索>"
        className="ml-1.5 h-6 w-[150px] border-2 border-[#9a9a9a] bg-white px-0.5 text-[15px] leading-5 placeholder:text-[#757575]"
      />
      <ToolButton icon="findProject" label="搜索" className="h-7 w-11" />
    </div>
  );
}

function PanelTitle({ text, children }: { text: string; children: ReactNode }) {
  return (
    <div className="flex h-[31px] shrink-0 items-center justify-between border-b border-[#e8e8e8] bg-[#b1b1b1] pr-1 pl-[7px]">
      <h2 className="text-[19px] leading-none font-bold text-white">{text}</h2>
      <div className="flex items-center gap-1.5">{children}</div>
    </div>
  );
}

function SectionBar({ text, icon }: { text: string; icon: string }) {
  return (
    <div className="flex h-[27px] shrink-0 items-stretch border-b-2 border-[#9a9a9a] bg-linear-to-b from-[#ececec] to-[#cfcfcf]">
      <button type="button" aria-label={text} className="flex w-[25px] items-center justify-center border-r border-[#8a8a8a]">
        <Icon name={icon} className="size-4" />
      </button>
      <h3 className="pl-1.5 text-[19px] leading-[25px] font-bold">{text}</h3>
    </div>
  );
}

function TreeRow({ node }: { node: Node }) {
  return (
    <li className="flex min-h-0 overflow-hidden border-b border-white">
      <div
        className={clsx(
          'flex min-w-0 flex-1 items-center border-r-2 border-r-[#f8f8f8]',
          treeIndent[node.level],
          node.selected && 'outline-2 -outline-offset-2 outline-dotted outline-[#8a8a8a]',
          node.selected ? 'bg-[#d0d6dc]' : node.shade ? 'bg-[#e1e1e1]' : 'bg-[#efefef]',
        )}
      >
        {node.state ? (
          <button type="button" aria-label={node.text} className="flex w-[22px] shrink-0 justify-center">
            <Icon name={node.state === 'open' ? 'nodeOpen' : 'nodeClosed'} className="size-[18px]" />
          </button>
        ) : (
          <span className="w-[22px] shrink-0" />
        )}
        <Icon name={node.icon} className="ml-0.5 size-5" />
        <span className={clsx('pl-[5px] leading-none whitespace-nowrap', labelSize(node.text), node.bold && 'font-bold')}>
          {node.text}
        </span>
      </div>
      <span className={clsx('w-6 shrink-0', node.selected ? 'bg-[#d4dce2]' : node.shade ? 'bg-[#e1e1e1]' : 'bg-[#efefef]')} />
    </li>
  );
}

function ProjectPanel() {
  return (
    <aside className="flex w-[337px] shrink-0 flex-col bg-[#e9e9e9]">
      <section className="flex min-h-0 flex-[681] flex-col">
        <PanelTitle text="项目树">
          <Icon name="columns" className="size-[18px]" />
          <Icon name="triLeft" className="size-[18px]" />
        </PanelTitle>
        <div className="flex h-[35px] shrink-0 items-end border-t-4 border-b border-t-[#f0f0f0] border-b-[#8a8a8a] bg-[#ccc] pl-2">
          <Tab active className="w-[78px] pl-3">设备</Tab>
        </div>
        <div className="flex h-[34px] shrink-0 items-center pr-1 pl-1">
          <ToolButton icon="newGroup" label="新建组" />
          <span className="flex-1" />
          <Separator />
          <ToolButton icon="listView" label="列表视图" active className="mx-1 h-7 w-7" />
          <ToolButton icon="portalOpen" label="打开视图" className="h-7 w-7" />
        </div>
        <div className="h-[26px] shrink-0 bg-[#c3c3c3]" />
        <div className="flex min-h-0 flex-1">
          <ul className="grid min-w-0 flex-1 grid-rows-[repeat(23,minmax(0,1fr))_10px]">
            {projectTree.map((node) => (
              <TreeRow key={node.text} node={node} />
            ))}
          </ul>
          <VScroll thumb={247} rest={262} />
        </div>
      </section>

      <section className="flex min-h-0 flex-[231] flex-col overflow-hidden border-t-[3px] border-[#1c2434]">
        <SectionBar text="详细视图" icon="barDown" />
        <div className="flex h-[31px] shrink-0 items-end border-b border-[#8a8a8a] bg-[#ccc] pl-2">
          <Tab active className="w-[78px] pl-3">模块</Tab>
        </div>
        <div className="h-8 shrink-0" />
        <div className="flex min-h-0 flex-1">
          <div className="min-w-0 flex-1 overflow-hidden bg-[#efefef]">
            <table className="w-full table-fixed border-collapse text-[15px] leading-none">
              <colgroup>
                <col className="w-[23px]" />
                <col className="w-[200px]" />
                <col />
              </colgroup>
              <thead>
                <tr className="h-6 border-y border-[#b4b4b4] bg-linear-to-b from-[#e8e8e8] to-[#d0d0d0] text-left">
                  <th aria-label="图标" />
                  <th className="border-x border-[#b4b4b4] pl-1 font-normal">名称</th>
                  <th aria-label="备注" />
                </tr>
              </thead>
              <tbody>
                {details.map((item, i) => (
                  <tr key={item.text} className="h-6 border-b border-white">
                    <td className={clsx('pl-px', i === 0 && 'bg-[#c3ced9]')}>
                      <Icon name={item.icon} />
                    </td>
                    <td className={clsx('pl-[5px]', i === 0 && 'bg-[#d0d6dc] outline-2 -outline-offset-2 outline-dotted outline-[#a0a0a0]')}>
                      {item.text}
                    </td>
                    <td />
                  </tr>
                ))}
              </tbody>
            </table>
          </div>
          <div className="flex flex-col">
            <span className="h-[25px] shrink-0 border-y border-l border-[#b4b4b4] bg-linear-to-b from-[#e8e8e8] to-[#d0d0d0]" />
            <div className="flex min-h-0 flex-1">
              <VScroll thumb={22} rest={46} />
            </div>
          </div>
        </div>
      </section>
    </aside>
  );
}

/* ---------- device view ---------- */

function Slot({ label, className }: { label: string; className: string }) {
  return (
    <div className={clsx('shrink-0', className)}>
      <div className="flex h-[53px] items-center justify-center bg-[#c9cad8]">{label}</div>
      <div className="mt-0.5 h-24 border-x-2 border-[#dfe0ea] bg-white" />
    </div>
  );
}

function DeviceCanvas() {
  return (
    <div className="relative min-w-0 flex-1 overflow-hidden bg-white text-[19px] leading-none font-medium">
      <span className="absolute top-[30px] left-[517px] flex h-[30px] w-[77px] -rotate-45 items-center justify-center bg-[#868d9c] text-[22px]">
        PLC_1
      </span>
      <span className="absolute top-[196px] left-[179px] text-[23px]">Rack_0</span>
      <span className="absolute top-[88px] left-[256px] flex h-[50px] w-[84px] items-center justify-center bg-[#a3a5b8]">
        <svg viewBox="0 0 14 28" className="h-7 w-3.5">
          <path d="M0 0v28l14-14z" fill="#c9cad8" />
        </svg>
      </span>
      <div className="absolute top-[139px] left-[256px] flex">
        <Slot label="103" className="w-[84px]" />
        <Slot label="102" className="ml-px w-[87px]" />
        <Slot label="101" className="ml-px w-[84px]" />
        <div className="-mt-px ml-px w-[262px] shrink-0 border-2 border-[#868d9c]">
          <div className="flex h-[52px] items-center justify-center bg-[#c9cad8]">1</div>
          <div className="relative mt-px h-24 bg-[#617382]">
            <svg viewBox="0 0 258 14" className="h-3.5 w-full">
              <path d="M0 0h258v6h-22c-14 0-18 8-30 8H0z" fill="#52626f" />
            </svg>
            <span className="absolute top-[22px] left-2.5 bg-[#128886] px-[3px] text-[11px] leading-[14px] font-bold text-white">SIEMENS</span>
            <span className="absolute top-[21px] left-[140px] font-['Liberation_Sans'] text-[9px] leading-[14px] text-white">SIMATIC S7-1200</span>
            <span className="absolute top-[17px] right-[3px] h-12 w-[5px] bg-[#a4d6e4]" />
          </div>
        </div>
        <Slot label="2" className="ml-[3px] w-[84px]" />
        <Slot label="3" className="ml-px w-[85px]" />
      </div>
    </div>
  );
}

function ZoomSlider() {
  return (
    <label className="flex w-[84px] flex-col">
      <input
        type="range"
        aria-label="缩放"
        defaultValue={50}
        className="h-3.5 w-full appearance-none bg-transparent [&::-webkit-slider-runnable-track]:h-0.5 [&::-webkit-slider-runnable-track]:bg-[#8a8a8a] [&::-webkit-slider-thumb]:-mt-1.5 [&::-webkit-slider-thumb]:h-3.5 [&::-webkit-slider-thumb]:w-2 [&::-webkit-slider-thumb]:appearance-none [&::-webkit-slider-thumb]:rounded-b-full [&::-webkit-slider-thumb]:border [&::-webkit-slider-thumb]:border-[#777] [&::-webkit-slider-thumb]:bg-[#ddd]"
      />
      <span className="flex justify-between">
        {[0, 1, 2, 3, 4, 5, 6].map((i) => (
          <span key={i} className="h-1 w-px bg-black" />
        ))}
      </span>
    </label>
  );
}

function DeviceOverview() {
  return (
    <div className="flex w-[201px] shrink-0 flex-col bg-[#e9e9e9] pt-0.5">
      <div className="flex h-[31px] shrink-0 items-end border-b border-[#8a8a8a] bg-[#c8c8c8] pl-2">
        <Tab active className="w-[119px] pl-3">设备概览</Tab>
      </div>
      <div className="flex min-h-0 flex-1 pt-2">
        <div className="min-w-0 flex-1 overflow-hidden">
          <table className="w-full table-fixed border-collapse text-[15px] leading-none">
            <colgroup>
              <col className="w-8" />
              <col className="w-6" />
              <col className="w-6" />
              <col />
            </colgroup>
            <thead>
              <tr className="h-6 border-y border-[#b4b4b4] bg-linear-to-b from-[#ececec] to-[#d2d6dc] text-left">
                <th aria-label="行" className="bg-[#d0d0d0]" />
                <th aria-label="状态" className="border-x border-[#c0c0c0]"><Icon name="wrenches" /></th>
                <th className="border-r border-[#c0c0c0] pl-1 font-normal">...</th>
                <th className="pl-1 font-normal">模块</th>
              </tr>
            </thead>
            <tbody>
              {overview.map((name, i) => (
                <tr key={i} className={clsx('h-6 border-b-2', i === 3 ? 'border-[#c3ced9]' : 'border-white')}>
                  <td className={i === 3 ? 'bg-[#c3ced9]' : 'bg-[#ccc]'} />
                  <td className="border-r-2 border-[#f4f4f4] bg-[#e1e1e1]" />
                  <td className={clsx('border-r-2 border-[#f4f4f4]', i === 3 ? 'bg-[#d4dadf]' : 'bg-[#e1e1e1]')} />
                  <td
                    className={clsx(
                      'text-sm leading-none whitespace-nowrap',
                      i === 3 ? 'bg-[#d4dadf]' : name ? 'bg-[#efefef] pl-[51px]' : 'bg-[#e1e1e1]',
                    )}
                  >
                    {i === 3 ? (
                      <span className="flex items-center">
                        <button type="button" aria-label="折叠" className="px-px"><Icon name="nodeOpen" className="size-[18px]" /></button>
                        <span className="pl-2">{name}</span>
                      </span>
                    ) : (
                      name
                    )}
                  </td>
                </tr>
              ))}
            </tbody>
          </table>
        </div>
        <div className="flex flex-col">
          <span className="h-[25px] shrink-0 border-y border-l border-[#b4b4b4] bg-linear-to-b from-[#e8e8e8] to-[#d0d0d0]" />
          <div className="flex min-h-0 flex-1">
            <VScroll thumb={56} rest={127} />
          </div>
        </div>
      </div>
      <div className="flex shrink-0 bg-[#c3c3c3] pr-6">
        <span className="w-8 bg-[#ccc]" />
        <HScroll thumb={21} rest={78} />
      </div>
    </div>
  );
}

function DeviceEditor() {
  return (
    <section className="flex min-h-0 flex-[386] flex-col bg-[#e9e9e9]">
      <div className="flex h-[31px] shrink-0 items-center justify-between bg-[#2d344c] pr-[7px] pl-1.5 text-white">
        <h2 className="flex items-center leading-none">
          <span className="text-[19px] font-bold">认识博途</span>
          <Icon name="triRight" className="mx-2 size-3.5" />
          <span className="text-[17px]">PLC_1 [CPU 1212C DC/DC/DC]</span>
        </h2>
        <div className="flex items-center gap-[7px]">
          {[['winMin', '最小化'], ['winRestore', '还原'], ['winMax', '最大化'], ['winClose', '关闭']].map(([icon, label]) => (
            <button key={icon} type="button" aria-label={label}>
              <Icon name={icon} className="size-4" />
            </button>
          ))}
        </div>
      </div>
      <div role="tablist" className="flex h-[35px] shrink-0 items-end justify-end gap-0.5 border-t-4 border-b border-t-[#f0f0f0] border-b-[#8a8a8a] bg-[#ccc] pr-[7px]">
        <Tab className="w-[131px] gap-1 pl-0.5"><Icon name="topology" />拓扑视图</Tab>
        <Tab className="w-[131px] gap-1 pl-0.5"><Icon name="network" />网络视图</Tab>
        <Tab active className="w-[131px] gap-1 pl-0.5"><Icon name="config" />设备视图</Tab>
      </div>
      <div className="flex min-h-0 flex-1">
        <div className="flex min-w-0 flex-1 flex-col">
          <div className="flex h-[34px] shrink-0 items-center pl-1">
            <ToolButton icon="networkGo" label="转到网络视图" />
            <Separator />
            <PickList value="PLC_1 [CPU 1212C]" label="设备" className="mx-1.5 w-[224px]" />
            <Separator />
            <ToolButton icon="fit" label="适合宽度" className="h-7 w-[34px]" />
            <Separator />
            <ToolButton icon="showName" label="显示名称" className="h-7 w-8" />
            <Separator />
            <ToolButton icon="showLabel" label="显示标签" active className="mx-0.5 h-7 w-7" />
            <ToolButton icon="grid" label="网格" />
            <ToolButton icon="tableSide" label="显示表格" active className="mx-px h-7 w-7" />
            <Separator />
            <ToolButton icon="zoomIn" label="放大" className="h-7 w-[30px]" />
            <ToolButton icon="drop" label="缩放列表" className="w-2.5" />
            <span className="flex-1" />
            <ToolButton icon="userView" label="保存窗口设置" className="mr-3.5 h-7 w-8" />
          </div>
          <div className="flex min-h-0 flex-1">
            <DeviceCanvas />
            <VScroll thumb={22} rest={193} />
          </div>
          <div className="flex h-[22px] shrink-0 items-center">
            <HScroll thumb={41} rest={556} />
            <span className="relative ml-2 flex h-[22px] w-[195px]">
              <input aria-label="缩放比例" defaultValue="150%" className="w-full border-2 border-[#a2a2a2] bg-white pl-0.5 text-sm leading-[18px]" />
              <DropArrow />
            </span>
            <span className="flex w-[128px] justify-center"><ZoomSlider /></span>
            <span className="flex h-full w-[22px] items-center justify-center bg-white"><Icon name="overviewCorner" /></span>
          </div>
        </div>
        <Splitter className="mt-[3px] pt-[122px]" />
        <DeviceOverview />
      </div>
    </section>
  );
}

/* ---------- properties ---------- */

function AddressField({ id, label, value, suffix, readOnly, focused }: { id: string; label: string; value: string; suffix: string; readOnly?: boolean; focused?: boolean }) {
  return (
    <div className="flex h-[22px] items-center">
      <label htmlFor={id} className="w-[242px] pr-3.5 text-right text-[15px] leading-none">{label}:</label>
      <span
        className={clsx(
          'flex h-[22px] w-[225px] border-2 text-sm leading-[18px]',
          focused ? 'border-[#5a80dc]' : 'border-[#9a9a9a]',
          readOnly ? 'bg-[#e1e1e1]' : 'bg-white',
        )}
      >
        <input id={id} defaultValue={value} readOnly={readOnly} className="min-w-0 flex-1 bg-transparent pl-[3px]" />
        <span className="w-[21px] bg-[#e1e1e1] pr-1 text-right">{suffix}</span>
      </span>
    </div>
  );
}

function BrowseField({ id, label, value }: { id: string; label: string; value: string }) {
  return (
    <div className="flex h-[22px] items-center">
      <label htmlFor={id} className="w-[242px] pr-3.5 text-right text-[15px] leading-none">{label}:</label>
      <span className="flex h-[22px] w-[350px] border-2 border-[#9a9a9a] bg-white">
        <input id={id} defaultValue={value} className="min-w-0 flex-1 bg-transparent pl-[3px] text-base leading-[18px]" />
        <button type="button" aria-label={`浏览${label}`} className="flex w-5 items-end justify-center gap-0.5 border-l border-[#b0b0b0] bg-linear-to-b from-[#f4f4f4] to-[#d4d4d4] pb-0.5">
          <span className="size-[3px] bg-black" />
          <span className="size-[3px] bg-black" />
          <span className="size-[3px] bg-black" />
        </button>
      </span>
    </div>
  );
}

function AddressGroup({ id, title, focused }: { id: string; title: string; focused?: boolean }) {
  return (
    <fieldset className="flex h-[180px] shrink-0 flex-col gap-2 bg-[#ccc] pl-[13px]">
      <h4 className="h-11 pt-2 pl-[5px] text-[19px] leading-none font-bold">{title}</h4>
      <AddressField id={`${id}-start`} label="起始地址" value="0" suffix=".0" />
      <AddressField id={`${id}-end`} label="结束地址" value="0" suffix=".7" readOnly focused={focused} />
      <BrowseField id={`${id}-ob`} label="组织块" value="--- (自动更新)" />
      <BrowseField id={`${id}-image`} label="过程映像" value="自动更新" />
    </fieldset>
  );
}

function PropertiesPane() {
  return (
    <section className="flex min-h-0 flex-[525] flex-col bg-[#e9e9e9]">
      <div className="flex h-[33px] shrink-0 items-end border-b-[3px] border-[#2d344c] bg-[#b1b1b1] pl-1.5">
        <h2 className="flex-1 pb-[7px] text-[17px] leading-none font-semibold text-[#f4f4f4]">PLC_1 [CPU 1212C DC/DC/DC]</h2>
        <Tab active className="w-[93px] gap-1 border-t-[#2d344c] pl-0.5"><Icon name="properties" />属性</Tab>
        <Tab className="ml-0.5 h-[26px] w-[101px] gap-1 pl-0.5"><Icon name="infoArrows" />信息<Icon name="infoBadge" className="ml-2 size-[17px]" /></Tab>
        <Tab className="ml-0.5 h-[26px] w-[94px] gap-1 pl-1"><Icon name="diagnose" className="size-[18px]" />诊断</Tab>
        <div className="flex gap-[7px] self-center pr-1.5 pl-6">
          <Icon name="winRestore" className="size-4" />
          <Icon name="rows" className="size-4" />
          <Icon name="triDown" className="size-4" />
        </div>
      </div>
      <div role="tablist" className="flex h-8 shrink-0 items-end gap-0.5 border-b border-[#8a8a8a] bg-[#ccc] pl-[7px]">
        <Tab active className="w-[78px] pl-3">常规</Tab>
        <Tab className="w-[101px] pl-3"><span className="text-lg leading-none">IO 变量</span></Tab>
        <Tab className="w-[118px] pl-3">系统常数</Tab>
        <Tab className="w-[78px] pl-3">文本</Tab>
      </div>
      <div className="flex min-h-0 flex-1 pt-0.5">
        <ul className="grid w-[224px] shrink-0 grid-rows-[repeat(19,minmax(0,1fr))_6px] bg-[#efefef]">
          {navItems.map((item, i) => (
            <li key={i} className={clsx('flex min-h-0 items-center border-b border-[#e4e4e4]', item.level && 'pl-5')}>
              {item.state ? (
                <button type="button" aria-label={item.text} className="flex w-[22px] shrink-0 justify-center">
                  <Icon name={item.state === 'open' ? 'nodeOpen' : 'nodeClosed'} className="size-4" />
                </button>
              ) : (
                <span className="w-[22px] shrink-0" />
              )}
              <a
                href="#props"
                className={clsx(
                  'px-px leading-[21px] whitespace-nowrap',
                  labelSize(item.text),
                  item.selected && 'bg-[#2f62d4] text-white outline-1 -outline-offset-1 outline-dotted outline-[#1c2c5c]',
                )}
              >
                {item.text}
              </a>
            </li>
          ))}
        </ul>
        <div className="flex pr-0.5">
          <VScroll thumb={366} rest={43} />
        </div>
        <Splitter className="pt-[193px]" />
        <div id="props" className="min-w-0 flex-1 pr-[30px] pl-[15px]">
          <div className="flex h-[45px] items-center gap-2.5 pt-1">
            <h3 className="pl-1 text-[17px] leading-none">I/O 地址</h3>
            <span className="mt-3.5 h-0.5 flex-1 bg-[#222]" />
          </div>
          <div className="flex flex-col gap-[7px]">
            <AddressGroup id="in" title="输入地址" focused />
            <AddressGroup id="out" title="输出地址" />
          </div>
        </div>
      </div>
    </section>
  );
}

/* ---------- hardware catalog ---------- */

const smallButton =
  'flex h-[26px] w-[30px] shrink-0 items-center justify-center rounded-sm border-2 border-[#a0a0a0] bg-linear-to-b from-[#f0f0f0] to-[#c8c8c8]';

function CatalogPanel() {
  return (
    <aside className="flex w-[319px] shrink-0 flex-col bg-[#e9e9e9]">
      <PanelTitle text="硬件目录">
        <Icon name="winRestore" className="size-4" />
        <Icon name="columns" className="size-[18px]" />
        <Icon name="triRight" className="size-[18px]" />
      </PanelTitle>
      <h3 className="h-[35px] shrink-0 border-b border-[#8a8a8a] bg-linear-to-b from-[#f8f8f8] to-[#dcdcdc] pt-2.5 pl-[7px] text-[19px] leading-none font-bold">选项</h3>
      <div className="flex h-[34px] shrink-0 items-center justify-end pr-1.5">
        <button type="button" aria-label="窗格"><Icon name="pane" /></button>
      </div>
      <div className="h-[3px] shrink-0 bg-[#8c8c8c]" />
      <SectionBar text="目录" icon="barDown" />
      <div className="flex shrink-0 gap-1.5 px-[5px] pt-1">
        <input type="text" aria-label="搜索目录" placeholder="<搜索>" className="h-[26px] min-w-0 flex-1 border-2 border-[#9a9a9a] bg-white px-1 text-[15px] leading-5 placeholder:text-black" />
        <button type="button" aria-label="向下搜索" className={smallButton}><Icon name="findDown" /></button>
        <button type="button" aria-label="向上搜索" className={smallButton}><Icon name="findUp" /></button>
      </div>
      <div className="flex h-[33px] shrink-0 items-center px-[5px] pt-1 text-[15px] leading-none">
        <label className="flex flex-1 items-center gap-1">
          <span className="relative flex size-[19px]">
            <input type="checkbox" defaultChecked className="size-full appearance-none border border-[#2c5a7c] bg-linear-to-br from-[#4cb4f0] to-[#8ee4fc]" />
            <svg viewBox="0 0 16 16" className="pointer-events-none absolute inset-0">
              <path d="M3 7l4 5 6-9" stroke="#0c2c70" strokeWidth="3" fill="none" />
            </svg>
          </span>
          过滤
        </label>
        <span className="pr-1">配置文件</span>
        <PickList value="<全部>" label="配置文件" className="mr-1.5 w-[114px]" />
        <button type="button" aria-label="管理配置文件" className={smallButton}><Icon name="profile" /></button>
      </div>
      <ul className="grid min-h-0 flex-1 grid-rows-[repeat(29,minmax(0,1fr))_4px] border-r-4 border-l-4 border-[#e9e9e9] bg-[#efefef]">
        {Array.from({ length: 29 }, (_, i) => catalog[i]).map((name, i) => (
          <li key={i} className="flex min-h-0 items-center border-b border-[#e8e8e8] pl-[3px]">
            {name && (
              <>
                <button type="button" aria-label={name} className="flex w-[18px] shrink-0 justify-center">
                  <Icon name="nodeClosed" className="size-[18px]" />
                </button>
                <Icon name="folderPlc" />
                <span className={clsx('ml-0.5 px-0.5 leading-[21px]', labelSize(name), i === 0 && 'bg-[#c3ced9]')}>{name}</span>
              </>
            )}
          </li>
        ))}
      </ul>
      <div className="h-0.5 shrink-0 bg-[#8c8c8c]" />
      <SectionBar text="信息" icon="barRight" />
    </aside>
  );
}

const sideTabs = [
  { text: '硬件目录', icon: 'catalogBook', className: 'h-[132px] font-bold text-black' },
  { text: '在线工具', icon: 'diagnose', className: 'h-[137px] text-[#666]' },
  { text: '任务', icon: 'tasks', className: 'h-[95px] text-[#666]' },
  { text: '库', icon: 'book', className: 'h-[72px] text-[#666]' },
];

function SideTabs() {
  return (
    <div className="w-[23px] shrink-0 bg-[#b1b1b1] pt-10">
      {sideTabs.map((tab) => (
        <button
          key={tab.text}
          type="button"
          className={clsx('flex w-full flex-col items-center gap-1.5 overflow-hidden border-b-4 border-[#9c9c9c] bg-[#e6e6e6] pt-0.5', tab.className)}
        >
          <Icon name={tab.icon} />
          <span className="text-[19px] leading-none [text-orientation:sideways] [writing-mode:vertical-rl]">{tab.text}</span>
        </button>
      ))}
    </div>
  );
}

/* ---------- bottom ---------- */

function StatusBar() {
  return (
    <footer className="flex h-[30px] shrink-0 items-end bg-[#1c1c1c] text-white">
      <button type="button" className="flex h-full w-[220px] items-center pt-1 pl-[34px] text-[17px] leading-none font-bold">
        <Icon name="triLeft" className="mr-2 size-[18px]" />
        Portal 视图
      </button>
      <button type="button" className="flex h-[25px] w-[141px] items-center gap-1.5 bg-[#c3c3c3] pl-[3px] text-base leading-none text-black">
        <Icon name="overviewTab" />
        总览
      </button>
      <button type="button" className="ml-1 flex h-[25px] w-[141px] items-center gap-1.5 bg-white pl-[3px] text-[15px] leading-none font-medium text-black">
        <Icon name="network" />
        PLC_1
      </button>
      <span className="flex-1" />
      <button type="button" aria-label="消息" className="flex h-[25px] w-[26px] items-center justify-center bg-[#c3c3c3]">
        <Icon name="statusToggle" />
      </button>
      <p className="ml-1.5 flex h-full w-[407px] items-center gap-1.5 border-l border-[#444] pt-1 pl-1.5 text-base leading-none">
        <Icon name="check" className="size-[18px]" />
        已创建项目 认识博途。
      </p>
    </footer>
  );
}

export default function App() {
  return (
    <div className="relative flex h-screen flex-col overflow-hidden bg-[#ccc] font-['Open_Sans','Noto_Sans_CJK_SC',sans-serif] text-[15px] text-black">
      <TitleBar />
      <div className="flex h-[62px] shrink-0 justify-between">
        <div>
          <nav className="flex h-[27px] items-end gap-[21px] pl-2">
            {menus.map((menu) => (
              <button key={menu} type="button" className="text-[15px] leading-[22px] whitespace-nowrap">{menu}</button>
            ))}
          </nav>
          <Toolbar />
        </div>
        <div className="pt-[15px] pr-6 text-right">
          <p className="pr-7 text-lg leading-5">Totally Integrated Automation</p>
          <p className="text-xl leading-5 font-semibold text-[#707070]">PORTAL</p>
        </div>
      </div>

      <main className="flex min-h-0 flex-1">
        <div className="flex w-6 shrink-0 flex-col overflow-hidden border-r-2 border-[#5a5f6c] bg-[#b1b1b1]">
          <span className="h-8 border-b border-white" />
          <button type="button" className="flex h-[276px] shrink-0 items-center border-b border-white">
            <span className="rotate-180 text-[19px] leading-none font-bold text-white [text-orientation:sideways] [writing-mode:vertical-rl]">启动</span>
          </button>
        </div>
        <ProjectPanel />
        <div className="flex min-w-0 flex-1 flex-col gap-1 border-r-[3px] border-l-4 border-[#1c2434] bg-[#1c2434]">
          <DeviceEditor />
          <PropertiesPane />
        </div>
        <CatalogPanel />
        <div className="w-0.5 shrink-0 bg-[#2c3444]" />
        <SideTabs />
      </main>

      <StatusBar />
      <div className="flex h-2.5 shrink-0 overflow-hidden bg-[#d8d8da] pl-[61px]">
        <span className="w-[428px] bg-white" />
        <span className="ml-[253px] w-[61px] bg-[#eee]" />
        <span className="flex-1" />
        <span className="w-[132px] pt-1.5 text-[15px] leading-none">10:47</span>
      </div>

      <span className="absolute top-[62px] right-0 flex h-[63px] w-[11px] items-end rounded-full border-2 border-[#666] bg-[#c4c4c4] p-0.5">
        <span className="h-9 w-full rounded-full bg-[#f08a4c]" />
      </span>
      <span className="absolute right-4 bottom-2 font-['Liberation_Sans'] text-[15px] leading-[18px] text-[#c0c0c0]">CSDN @Clockwisee</span>
    </div>
  );
}
